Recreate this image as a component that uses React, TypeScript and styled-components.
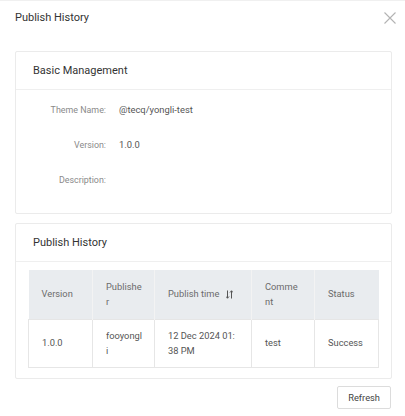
import React from "react";
import styled, { createGlobalStyle } from "styled-components";

const Global = createGlobalStyle`
  html, body { margin: 0; padding: 0; background: #fff; }
  body { font-family: Roboto, "Noto Sans", "Liberation Sans", sans-serif; color: #333; }
  * { box-sizing: border-box; }
`;

const Modal = styled.div`
  width: 405px;
  height: 416px;
  background: #fff;
  border-top: 1px solid #f0f0f0;
  display: flex;
  flex-direction: column;
  overflow: hidden;
`;

const Header = styled.div`
  height: 34px;
  padding: 0 8px 0 15px;
  display: flex;
  align-items: center;
  justify-content: space-between;
`;

const Title = styled.div`
  font-size: 11px;
  color: #333;
  line-height: 16px;
`;

const Close = styled.button`
  width: 14px;
  height: 14px;
  padding: 0;
  border: 0;
  background: none;
  display: flex;
  align-items: center;
  justify-content: center;
  cursor: pointer;
`;

const Body = styled.div`
  padding: 16px 13px 0 15px;
  display: flex;
  flex-direction: column;
  gap: 9px;
`;

const Card = styled.section`
  border: 1px solid #ebebeb;
  border-radius: 2px;
  background: #fff;
`;

const CardHead = styled.div`
  height: 38px;
  padding: 0 17px;
  display: flex;
  align-items: center;
  border-bottom: 1px solid #efefef;
  font-size: 11px;
  color: #333;
`;

const InfoBody = styled.div`
  padding: 10px 0 23px;
  display: flex;
  flex-direction: column;
  gap: 15px;
`;

const InfoRow = styled.div`
  display: grid;
  grid-template-columns: 90px 1fr;
  column-gap: 13px;
  line-height: 20px;
  font-size: 9.4px;
`;

const Label = styled.div`
  text-align: right;
  color: #8a8a8a;
  font-size: 8.9px;
`;

const Value = styled.div`
  color: #555;
`;

const TableWrap = styled.div`
  padding: 8px 14px 10px 12px;
`;

const Table = styled.table`
  width: 350px;
  border-collapse: collapse;
  table-layout: fixed;
  font-size: 9.3px;
  line-height: 14.6px;
`;

const Th = styled.th<{ $w: number }>`
  width: ${(p) => p.$w}px;
  background: #e9ecef;
  color: #6b6b6b;
  font-weight: 400;
  text-align: left;
  padding: 10px 12px 10px 13px;
  height: 49px;
  border-left: 1px solid #f3f3f3;
  word-break: break-all;
  vertical-align: middle;
  &:first-child { border-left: 0; }
`;

const Td = styled.td`
  color: #555;
  padding: 9px 11px 9px 13px;
  height: 47px;
  border: 1px solid #e6e6e6;
  word-break: break-all;
  vertical-align: middle;
`;

const SortLabel = styled.span`
  display: inline-flex;
  align-items: center;
  gap: 7px;
  white-space: nowrap;
`;

const Footer = styled.div`
  display: flex;
  justify-content: flex-end;
  padding: 7px 14px 0 0;
`;

const Button = styled.button`
  height: 23px;
  padding: 0 10px;
  border: 1px solid #dcdcdc;
  border-radius: 2px;
  background: #fff;
  font-family: inherit;
  font-size: 9.3px;
  color: #444;
  cursor: pointer;
`;

const SortIcon = () => (
  <svg width="7" height="9" viewBox="0 0 7 9" fill="none" stroke="#555" strokeWidth="1">
    <path d="M1.5 0.5 V8.2 M0 6.5 L1.5 8.2 L3 6.5" />
    <path d="M5.5 8.5 V0.8 M4 2.5 L5.5 0.8 L7 2.5" />
  </svg>
);

const CloseIcon = () => (
  <svg width="12" height="12" viewBox="0 0 12 12" stroke="#b3b3b3" strokeWidth="1.1">
    <path d="M0.5 0.5 L11.5 11.5 M11.5 0.5 L0.5 11.5" />
  </svg>
);

export default function App() {
  return (
    <>
      <Global />
      <Modal>
        <Header>
          <Title>Publish History</Title>
          <Close aria-label="close">
            <CloseIcon />
          </Close>
        </Header>
        <Body>
          <Card>
            <CardHead>Basic Management</CardHead>
            <InfoBody>
              <InfoRow>
                <Label>Theme Name:</Label>
                <Value>@tecq/yongli-test</Value>
              </InfoRow>
              <InfoRow>
                <Label>Version:</Label>
                <Value>1.0.0</Value>
              </InfoRow>
              <InfoRow>
                <Label>Description:</Label>
                <Value></Value>
              </InfoRow>
            </InfoBody>
          </Card>
          <Card>
            <CardHead>Publish History</CardHead>
            <TableWrap>
              <Table>
                <thead>
                  <tr>
                    <Th $w={64}>Version</Th>
                    <Th $w={62}>Publisher</Th>
                    <Th $w={97}>
                      <SortLabel>
                        Publish time <SortIcon />
                      </SortLabel>
                    </Th>
                    <Th $w={63}>Comment</Th>
                    <Th $w={64}>Status</Th>
                  </tr>
                </thead>
                <tbody>
                  <tr>
                    <Td>1.0.0</Td>
                    <Td>fooyongli</Td>
                    <Td>12 Dec 2024 01:38 PM</Td>
                    <Td>test</Td>
                    <Td>Success</Td>
                  </tr>
                </tbody>
              </Table>
            </TableWrap>
          </Card>
        </Body>
        <Footer>
          <Button>Refresh</Button>
        </Footer>
      </Modal>
    </>
  );
}
